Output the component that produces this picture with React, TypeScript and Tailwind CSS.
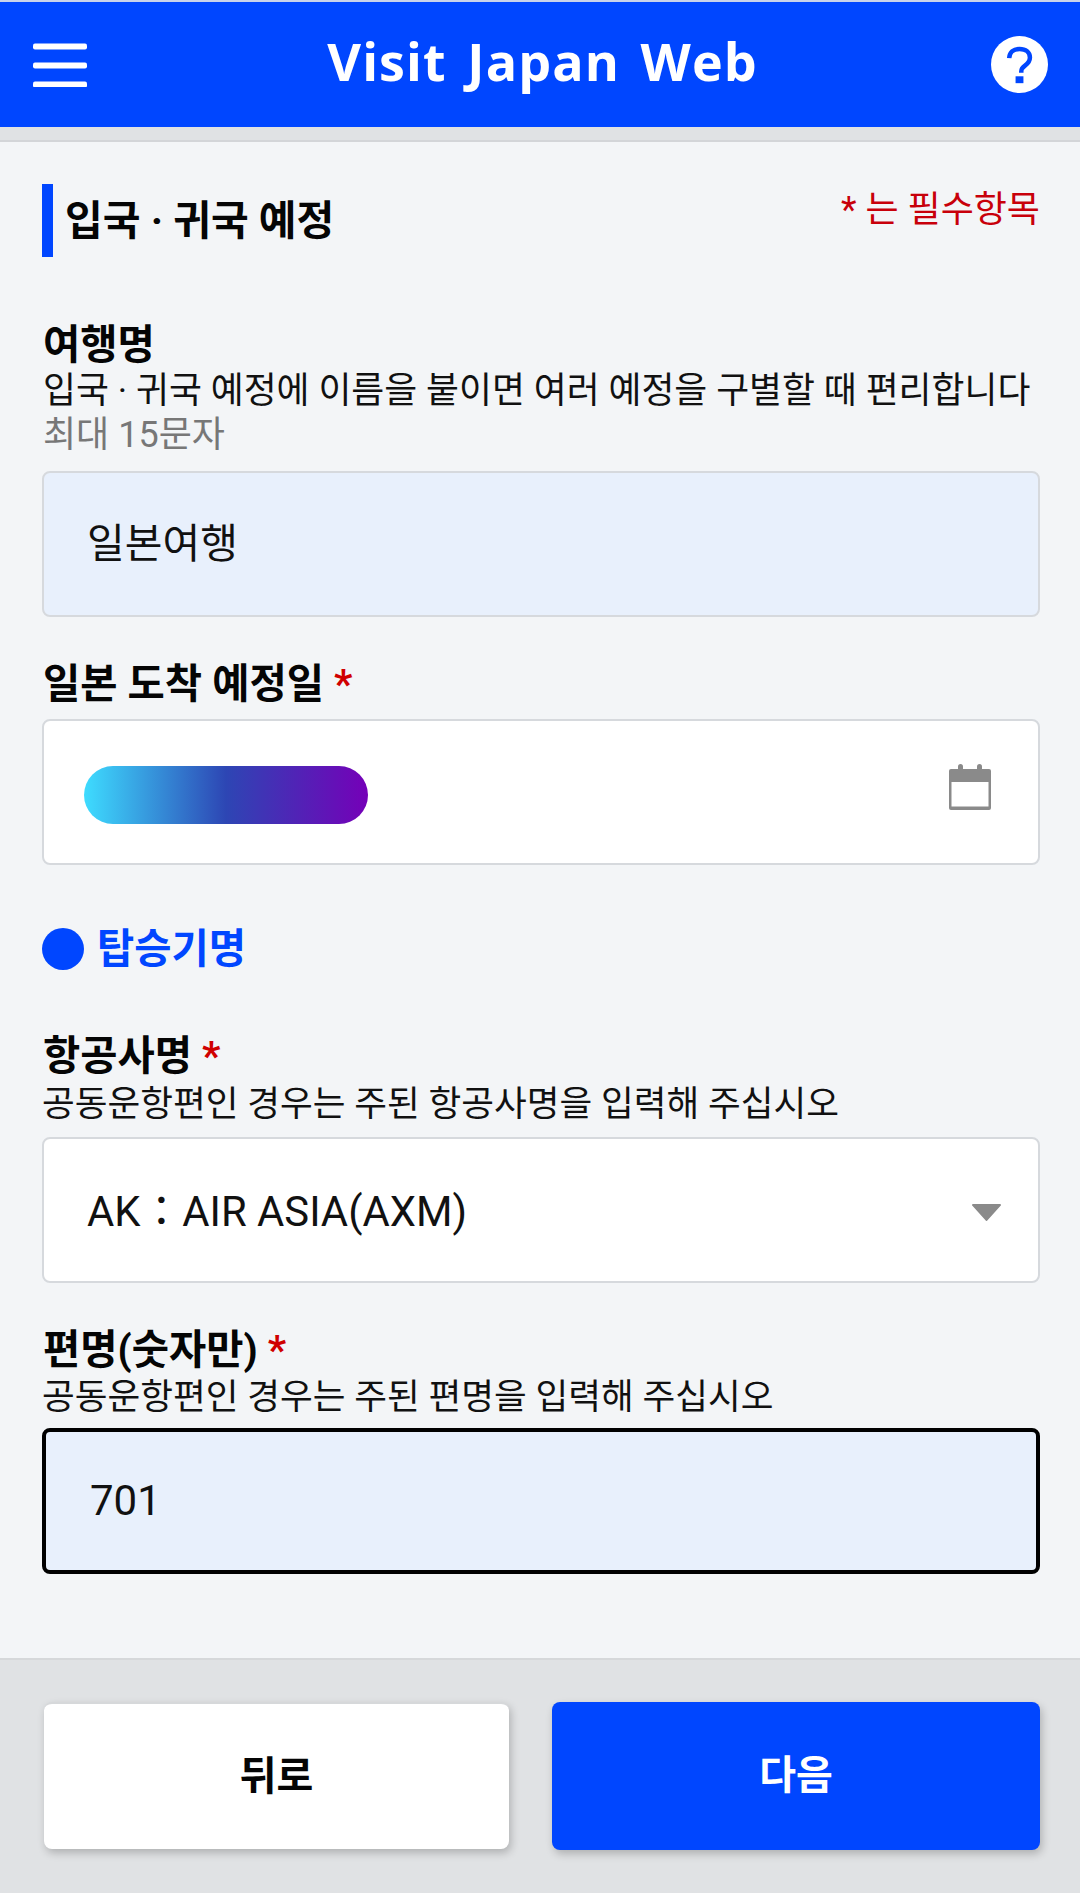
const FONT = "font-['Roboto','Noto_Sans_CJK_KR',sans-serif]";

function Star() {
  return <span className="ml-[10px] text-[#d00000] font-bold">*</span>;
}

function Box({ bg, focused, children }: { bg: string; focused?: boolean; children?: React.ReactNode }) {
  return (
    <div
      className={`flex h-[146px] w-[998px] shrink-0 items-center justify-between rounded-[8px] text-[41px] leading-[48px] text-[#111] ${bg} ${
        focused ? "border-[4px] border-black pl-[44px]" : "border-2 border-[#d6d9dd] pl-[43px]"
      }`}
    >
      {children}
    </div>
  );
}

export default function App() {
  return (
    <div className={`flex h-[1893px] w-[1080px] flex-col overflow-hidden bg-[#f3f5f7] ${FONT}`}>
      <div className="h-[2px] bg-[#c9d3ea]" />
      <header className="flex h-[125px] items-center justify-between bg-[#0046ff] pl-[33px] pr-[32px]">
        <svg width="54" height="44" viewBox="0 0 54 44">
          <rect x="0" y="0.5" width="54" height="6" rx="2" fill="#fff" />
          <rect x="0" y="19.5" width="54" height="6" rx="2" fill="#fff" />
          <rect x="0" y="38.5" width="54" height="6" rx="2" fill="#fff" />
        </svg>
        <h1 className="ml-[7px] mt-[-7px] font-['Open_Sans',sans-serif] text-[52px] font-bold leading-[60px] tracking-[1.1px] text-white [word-spacing:6px]">
          Visit Japan Web
        </h1>
        <svg width="57" height="57" viewBox="0 0 58 58">
          <circle cx="29" cy="29" r="29" fill="#fff" />
          <path
            d="M18.5 22.500c.3-6 4.600-9.300 10.600-9.300 6.200 0 10.500 3.500 10.500 8.700 0 4-2.100 6.100-5 8.200-2.800 2-3.800 3.200-3.800 6.100v1.300"
            fill="none"
            stroke="#0046ff"
            strokeWidth="4.6"
          />
          <rect x="25" y="41" width="8" height="7" fill="#0046ff" />
        </svg>
      </header>
      <div className="h-[15px] border-b-2 border-[#d3d5d8] bg-[#e0e2e4]" />

      <main className="flex flex-1 flex-col bg-[#f3f5f7] px-[42px] pt-[42px]">
        <div className="flex h-[73px] items-start justify-between">
          <h2 className="flex h-full items-center border-l-[11px] border-[#0046ff] pl-[12px] text-[41px] font-bold leading-[48px] text-[#050505]">
            입국 · 귀국 예정
          </h2>
          <p className="mr-[-2px] mt-[4px] text-[36px] leading-[44px] text-[#c8000a]">* 는 필수항목</p>
        </div>

        <label className="ml-[1px] mt-[64px] text-[40.5px] font-bold leading-[48px] text-[#050505]">여행명</label>
        <p className="ml-[1px] text-[35.8px] leading-[44px] text-[#111]">입국 · 귀국 예정에 이름을 붙이면 여러 예정을 구별할 때 편리합니다</p>
        <p className="mb-[13px] ml-[1px] text-[36px] leading-[44px] text-[#777]">최대 15문자</p>
        <div className="mt-[1px]">
          <Box bg="bg-[#e8f0fc]">일본여행</Box>
        </div>

        <label className="mb-[11px] ml-[1px] mt-[43px] text-[40.5px] font-bold leading-[48px] text-[#050505]">
          일본 도착 예정일
          <Star />
        </label>
        <Box bg="bg-white">
          <div className="ml-[-3px] mt-[5px] h-[58px] w-[284px] rounded-[29px] bg-[linear-gradient(90deg,#3edcff_0%,#2d46b4_50%,#7500b8_100%)]" />
          <svg width="42" height="46" viewBox="0 0 42 46" className="mr-[47px] mt-[-10px]">
            <rect x="9" y="0" width="5" height="10" rx="2.5" fill="#8a8a8a" />
            <rect x="28" y="0" width="5" height="10" rx="2.5" fill="#8a8a8a" />
            <path d="M2 5h38a2 2 0 0 1 2 2v37a2 2 0 0 1-2 2H2a2 2 0 0 1-2-2V7a2 2 0 0 1 2-2z" fill="#8a8a8a" />
            <rect x="2.5" y="18" width="37" height="24.5" fill="#fff" />
          </svg>
        </Box>

        <div className="mt-[63px] flex h-[42px] items-center">
          <span className="h-[42px] w-[42px] rounded-full bg-[#0046ff]" />
          <span className="ml-[13px] text-[40.5px] font-bold leading-[48px] text-[#0046ff]">탑승기명</span>
        </div>

        <label className="ml-[1px] mt-[62px] text-[40.5px] font-bold leading-[48px] text-[#050505]">
          항공사명
          <Star />
        </label>
        <p className="mb-[11px] mt-[2px] text-[35.6px] leading-[44px] text-[#111]">공동운항편인 경우는 주된 항공사명을 입력해 주십시오</p>
        <Box bg="bg-white">
          <span className="mt-[4px] text-[41.8px]">AK：AIR ASIA(AXM)</span>
          <svg width="29" height="17" viewBox="0 0 29 17" className="mr-[37px] mt-[4px]">
            <path d="M1 0h27a1 1 0 0 1 .8 1.600L15.300 16.500a1 1 0 0 1-1.600 0L.2 1.600A1 1 0 0 1 1 0z" fill="#8a8a8a" />
          </svg>
        </Box>

        <label className="ml-[1px] mt-[43px] text-[40.5px] font-bold leading-[48px] text-[#050505]">
          편명(숫자만)
          <Star />
        </label>
        <p className="mb-[9px] mt-[1px] text-[35.6px] leading-[44px] text-[#111]">공동운항편인 경우는 주된 편명을 입력해 주십시오</p>
        <Box bg="bg-[#e8f0fc]" focused>
          <span className="text-[42px]">701</span>
        </Box>
      </main>

      <footer className="flex h-[235px] shrink-0 gap-[43px] border-t-2 border-[#d6d8da] bg-[#e0e2e4] pl-[44px] pr-[40px] pt-[42px]">
        <button className="h-[147px] w-[465px] rounded-[8px] border-t-2 border-[#d6d8da] bg-white text-[40px] font-bold text-[#050505] shadow-[2px_4px_8px_rgba(0,0,0,0.22)]">
          뒤로
        </button>
        <button className="h-[148px] w-[488px] rounded-[8px] bg-[#0046ff] text-[40px] font-bold text-white shadow-[2px_4px_8px_rgba(0,0,0,0.22)]">
          다음
        </button>
      </footer>
    </div>
  );
}
